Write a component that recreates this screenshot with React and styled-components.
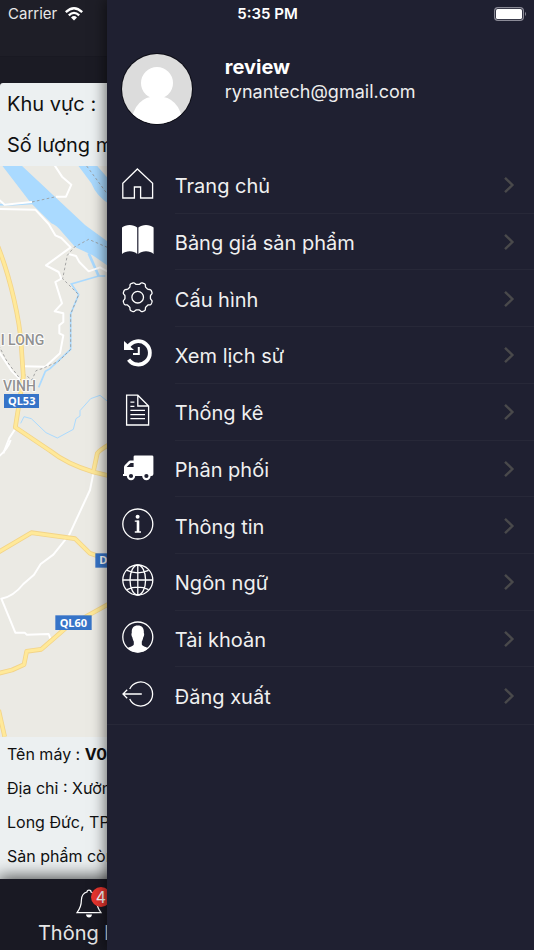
import React from 'react';
import styled, { createGlobalStyle } from 'styled-components';

const GlobalStyle = createGlobalStyle`
  * {
    box-sizing: border-box;
  }
  body {
    margin: 0;
    background: #1f2031;
    font-family: Inter, 'Noto Sans', sans-serif;
  }
`;

const line = { fill: 'none', stroke: 'currentColor', strokeWidth: 1.3 };

const gearPath = () => {
  const points = [];
  for (let i = 0; i <= 160; i += 1) {
    const angle = (i / 160) * Math.PI * 2;
    const wave = Math.cos(angle * 8 + Math.PI);
    const radius = 13.9 + 1.2 * Math.tanh(wave * 2.2);
    const turn = angle + Math.PI / 4;
    points.push(
      `${(15.7 + radius * Math.cos(turn)).toFixed(2)} ${(16.2 + radius * Math.sin(turn)).toFixed(2)}`
    );
  }
  return `M${points.join('L')}Z`;
};

const HomeIcon = () => (
  <g {...line}>
    <path d="M15.4 2 30.6 16.2V31H18.6V20H12.4V31H.8V16.2Z" />
  </g>
);

const BookIcon = () => (
  <path
    fill="currentColor"
    d="M0 3.6C3.6 0 11.6 0 15.2 3.6V30C11.6 26.4 4 26.4 0 30ZM16.4 3.6C20 0 28 0 31.6 3.6V30C28 26.4 20 26.4 16.4 30Z"
  />
);

const GearIcon = () => (
  <g {...line}>
    <path d={gearPath()} />
    <circle cx="15.7" cy="16.2" r="5.8" />
  </g>
);

const HistoryIcon = () => (
  <g fill="none" stroke="currentColor">
    <path strokeWidth="3.8" d="M6.4 9.4A11.7 11.7 0 1 1 6.6 22.6" />
    <path strokeWidth="2" d="M16.8 10V17H11" />
    <path fill="currentColor" stroke="none" d="M2 4 12 13H2Z" />
  </g>
);

const PaperIcon = () => (
  <g {...line}>
    <path d="M4.6 1.2H15.8L26.6 12V31H4.6ZM15.8 1.2V12H26.6" />
    <path d="M8.4 8.2H12.4M8.4 12.4H12.4M8.4 16.4H23M8.4 20.6H23M8.4 24.6H23" />
  </g>
);

const TruckIcon = () => (
  <g>
    <path
      fill="currentColor"
      fillRule="evenodd"
      d="M13 4.4H30Q31.4 4.4 31.4 5.8V23Q31.4 25 29.4 25H1V23H2V16.2Q2 15 3 14L6.4 10.4Q7.2 9.6 8.4 9.6H11.6V5.8Q11.6 4.4 13 4.4ZM4.6 16H11.6V12H8.6Z"
    />
    {[9, 24.4].map((cx) => (
      <g key={cx}>
        <circle cx={cx} cy="25" r="4.2" fill="currentColor" />
        <circle cx={cx} cy="25" r="2.1" fill="#1f2031" />
      </g>
    ))}
  </g>
);

const InfoIcon = () => (
  <g {...line}>
    <circle cx="15.8" cy="16" r="15" />
    <circle cx="15.6" cy="8.8" r="2" fill="currentColor" stroke="none" />
    <path strokeWidth="2.6" d="M16 12.6V24" />
    <path d="M12.8 13.2H16.8M12.8 24H19" />
  </g>
);

const GlobeIcon = () => (
  <g {...line}>
    <circle cx="15.8" cy="16" r="15" />
    <ellipse cx="15.8" cy="16" rx="7.8" ry="15" />
    <path d="M15.8 1V31M.8 16H30.8M5 6.4Q15.8 11.2 26.6 6.4M5 25.6Q15.8 20.8 26.6 25.6" />
  </g>
);

const PersonIcon = () => (
  <g>
    <path
      fill="currentColor"
      d="M15.8 4.4C20.6 4.4 22.2 7.6 21.8 12C22.6 12.8 22 15.4 21.2 16.4C20.8 18.6 20.2 19.6 19.8 20.6V23.4C20.8 25.6 24.6 26 26.4 27A15 15 0 0 1 5.2 27C7 26 10.8 25.6 11.8 23.4V20.6C11.4 19.6 10.8 18.6 10.4 16.4C9.6 15.4 9 12.8 9.8 12C9.4 7.6 11 4.4 15.8 4.4Z"
    />
    <circle cx="15.8" cy="16" r="15" {...line} />
  </g>
);

const LogoutIcon = () => (
  <g {...line}>
    <path d="M7.7 11A12 12 0 1 1 7.7 21" />
    <path d="M19.8 16H1.2M5.2 11.8 1 16 5.2 20.2" />
  </g>
);

const MENU = [
  { label: 'Trang chủ', Icon: HomeIcon },
  { label: 'Bảng giá sản phẩm', Icon: BookIcon },
  { label: 'Cấu hình', Icon: GearIcon },
  { label: 'Xem lịch sử', Icon: HistoryIcon },
  { label: 'Thống kê', Icon: PaperIcon },
  { label: 'Phân phối', Icon: TruckIcon },
  { label: 'Thông tin', Icon: InfoIcon },
  { label: 'Ngôn ngữ', Icon: GlobeIcon },
  { label: 'Tài khoản', Icon: PersonIcon },
  { label: 'Đăng xuất', Icon: LogoutIcon },
];

const YELLOW_ROADS = [
  'M-6 260C30 350 60 480 64 560L70 650L46 802L150 872Q200 912 280 936L330 948',
  'M280 936L292 880Q296 872 330 852',
  'M-4 1176L94 1118L225 1136L270 1180L300 1190',
  'M-4 1540L36 1530L72 1514L80 1474L124 1468L200 1402L330 1330',
  'M-4 1650L14 1730',
];

const WHITE_ROADS = [
  'M160 10L186 50L214 74L198 110L168 110M96 126L14 134L-4 118',
  'M-4 147L106 149L146 192L166 226L184 234L212 262L138 316L176 336L184 356L166 366L186 430L164 454L190 460V486L178 496V520L190 526L180 580L136 620L70 619',
  'M206 282L228 288L238 306L266 334L300 322L322 334',
  'M-4 574L36 634L66 664',
  'M46 806L28 834L10 880',
  'M32 840Q24 866 -4 890',
  'M280 940L270 990L208 1124L160 1184L122 1212L102 1244L70 1272Q40 1310 4 1316L46 1418L74 1418L80 1424L146 1422L152 1438',
];

const Map = () => (
  <MapSvg viewBox="0 18 1602 1713" preserveAspectRatio="xMinYMin slice" role="img" aria-label="Bản đồ">
    <g fill="#aadaff">
      <path d="M6 16H64L256 196L330 250V322L278 286L226 262L184 214Q170 196 154 190L92 128Z" />
      <path d="M234 16H290L330 62V134Q290 110 274 70Z" />
    </g>
    <g fill="none" stroke="#aadaff" strokeWidth="5">
      <path strokeWidth="8" d="M266 280L296 348" />
      <path d="M316 348H296L214 372L236 404L212 462V568L150 626L136 634L116 682" />
      <path strokeWidth="3" d="M62 790L72 770L94 776L138 818L172 834L220 808L228 776L240 768V752L272 716L300 706L330 730" />
      <path d="M-4 134H40L96 130" />
    </g>
    <g fill="none" stroke="#fff" strokeWidth="6" strokeLinejoin="round">
      {WHITE_ROADS.map((d) => (
        <path key={d} d={d} />
      ))}
    </g>
    <g fill="none" stroke="#9a9a9a" strokeWidth="2.6" strokeDasharray="8 7">
      <path d="M96 126L168 110" />
      <path d="M260 18L322 102" />
      <path d="M322 262L266 238L222 262L202 286L188 356L236 404L212 462V568L176 604L126 626L108 632L96 660L70 640" />
      <path d="M-4 556L22 606L66 664" />
    </g>
    <g fill="none" strokeLinejoin="round">
      {YELLOW_ROADS.map((d) => (
        <path key={d} d={d} stroke="#f3d488" strokeWidth="14" />
      ))}
      {YELLOW_ROADS.map((d) => (
        <path key={d} d={d} stroke="#ffe999" strokeWidth="9" />
      ))}
    </g>
    <g fontFamily="Roboto, sans-serif" fontSize="42" fontWeight="500" fill="#919191" stroke="#fff" strokeWidth="5" paintOrder="stroke">
      <text x="2" y="555">I LONG</text>
      <text x="9" y="693">VINH</text>
    </g>
    <g fill="#3674c8">
      <rect x="12" y="702" width="105" height="42" />
      <rect x="166" y="1366" width="109" height="44" />
      <rect x="286" y="1180" width="110" height="43" />
    </g>
    <g fontFamily="'Noto Sans', sans-serif" fontSize="33" fontWeight="700" fill="#fff">
      <text x="24" y="735">QL53</text>
      <text x="179" y="1400">QL60</text>
      <text x="298" y="1213">D</text>
    </g>
  </MapSvg>
);

const StatusBar = () => (
  <Status>
    <Carrier>
      Carrier
      <svg width="18" height="14" viewBox="0 0 18 14" aria-hidden="true">
        <g fill="none" stroke="#fff" strokeWidth="2.3">
          <path d="M.8 5.2Q9-2.6 17.2 5.2" />
          <path d="M3.8 8.4Q9 3.4 14.2 8.4" />
        </g>
        <path fill="#fff" d="M6 10.4Q9 7.8 12 10.4L9 13.6Z" />
      </svg>
    </Carrier>
    <Clock>5:35 PM</Clock>
    <Battery viewBox="0 0 33 14" aria-hidden="true">
      <rect x=".6" y=".6" width="28.8" height="12.8" rx="3.4" fill="none" stroke="#8b8b97" strokeWidth="1.2" />
      <rect x="2" y="2" width="26" height="10" rx="1.6" fill="#fff" />
      <path d="M31 4.8Q33 7 31 9.2Z" fill="#8b8b97" />
    </Battery>
  </Status>
);

const App = () => (
  <>
    <GlobalStyle />
    <Page>
      <Screen>
        <Header>
          <HeaderTop />
        </Header>
        <Filter>
          <FilterRow>Khu vực :</FilterRow>
          <FilterRow>Số lượng máy</FilterRow>
        </Filter>
        <MapArea>
          <Map />
        </MapArea>
        <Machine>
          <MachineRow>
            Tên máy : <b>V0</b>
          </MachineRow>
          <MachineRow>Địa chỉ : Xưởng</MachineRow>
          <MachineRow>Long Đức, TP</MachineRow>
          <MachineRow>Sản phẩm còn</MachineRow>
        </Machine>
        <TabBar>
          <Tab type="button">
            <Bell>
              <svg width="26" height="30" viewBox="0 0 26 30" aria-hidden="true">
                <path
                  fill="none"
                  stroke="#fff"
                  strokeWidth="1.2"
                  d="M13 1.2Q15 1.2 15 3Q20.4 4.4 20.6 11Q20.6 18 25 23.6H1Q5.4 18 5.4 11Q5.6 4.4 11 3Q11 1.2 13 1.2Z"
                />
                <path fill="#fff" d="M10 25.6H16Q15.6 28.6 13 28.6Q10.4 28.6 10 25.6Z" />
              </svg>
              <Badge>4</Badge>
            </Bell>
            Thông báo
          </Tab>
        </TabBar>
      </Screen>
      <Drawer>
        <Profile>
          <Avatar viewBox="0 0 72 72" role="img" aria-label="review">
            <clipPath id="face">
              <circle cx="36" cy="36" r="35" />
            </clipPath>
            <circle cx="36" cy="36" r="36" fill="#0d0d16" />
            <g clipPath="url(#face)">
              <rect width="72" height="72" fill="#dcdcdc" />
              <circle cx="36" cy="30" r="16" fill="#fff" />
              <path fill="#fff" d="M10 72Q12 44 36 43Q60 44 62 72Z" />
            </g>
          </Avatar>
          <div>
            <UserName>review</UserName>
            <Email>rynantech@gmail.com</Email>
          </div>
        </Profile>
        <nav>
          <Menu>
            {MENU.map(({ label, Icon }) => (
              <MenuItem key={label}>
                <MenuLink href="#">
                  <IconCell>
                    <svg width="32" height="32" viewBox="0 0 32 32" aria-hidden="true">
                      <Icon />
                    </svg>
                  </IconCell>
                  <MenuLabel>
                    <MenuText>{label}</MenuText>
                    <svg width="12" height="18" viewBox="0 0 12 18" aria-hidden="true">
                      <path fill="none" stroke="#49494b" strokeWidth="2.4" d="M2 1.8 9.4 9 2 16.2" />
                    </svg>
                  </MenuLabel>
                </MenuLink>
              </MenuItem>
            ))}
          </Menu>
        </nav>
      </Drawer>
      <StatusBar />
    </Page>
  </>
);

const Page = styled.div`
  position: relative;
  min-height: 100vh;
  overflow: hidden;
  color: #fff;
`;

const Screen = styled.main`
  display: flex;
  flex-direction: column;
  min-height: 100vh;
  background: #1b1b24;
  color: #111;
`;

const Header = styled.header`
  height: 83px;
`;

const HeaderTop = styled.div`
  height: 57px;
  background: #1e1e27;
  border-bottom: 1px solid #191922;
`;

const Filter = styled.section`
  padding: 1px 7px 0;
  border-radius: 3px 3px 0 0;
  background: #ecf0f1;
`;

const FilterRow = styled.div`
  font-size: 20px;
  line-height: 41px;
  white-space: nowrap;
`;

const MapArea = styled.section`
  flex: 1 1 0;
  min-height: 0;
  overflow: hidden;
  background: #ebeae4;
`;

const MapSvg = styled.svg`
  display: block;
  width: 100%;
  height: 100%;
`;

const Machine = styled.section`
  padding: 0 7px 6px;
  background: #ecf0f1;
`;

const MachineRow = styled.div`
  font-size: 16px;
  line-height: 34px;
  white-space: nowrap;
`;

const TabBar = styled.footer`
  display: flex;
  height: 71px;
  background: #191923;
  box-shadow: 0 0 16px 2px rgb(0 0 0 / 70%);
`;

const Tab = styled.button`
  flex: 0 0 33.333%;
  display: flex;
  flex-direction: column;
  align-items: center;
  padding: 10px 0 0;
  border: 0;
  background: none;
  color: #e6e6e6;
  font: inherit;
  font-size: 20px;
  line-height: 24px;
`;

const Bell = styled.span`
  position: relative;
  height: 32px;
`;

const Badge = styled.span`
  position: absolute;
  top: -2px;
  left: 15px;
  width: 20px;
  height: 20px;
  border-radius: 50%;
  background: #e8352e;
  color: #fff;
  font-size: 16px;
  line-height: 20px;
  text-align: center;
`;

const Drawer = styled.aside`
  position: absolute;
  inset: 0 0 0 20%;
  padding-top: 53px;
  background: #1f2031;
  box-shadow: 0 0 14px 1px rgb(0 0 0 / 60%);
`;

const Profile = styled.div`
  display: flex;
  gap: 32px;
  padding: 0 14px 32px;
`;

const Avatar = styled.svg`
  flex: none;
  width: 72px;
  height: 72px;
`;

const UserName = styled.div`
  font-size: 20px;
  font-weight: 700;
  line-height: 28px;
`;

const Email = styled.div`
  color: #ededed;
  font-size: 18px;
  line-height: 22px;
`;

const Menu = styled.ul`
  display: grid;
  grid-auto-rows: 1fr;
  min-height: 568px;
  margin: 0;
  padding: 0;
  border-bottom: 1px solid #272838;
  list-style: none;
`;

const MenuItem = styled.li`
  display: flex;
`;

const MenuLink = styled.a`
  flex: 1;
  display: flex;
  padding-left: 15px;
  color: #f0f0f0;
  text-decoration: none;
`;

const IconCell = styled.span`
  display: flex;
  align-items: center;
  width: 53px;
  padding-bottom: 4px;
  color: #fff;
`;

const MenuLabel = styled.span`
  flex: 1;
  display: flex;
  align-items: center;
  justify-content: space-between;
  padding: 1px 19px 0 0;

  ${MenuItem}:not(:last-child) & {
    border-bottom: 1px solid #272838;
  }
`;

const MenuText = styled.span`
  padding-top: 2px;
  font-size: 20px;
  line-height: 24px;
`;

const Status = styled.div`
  position: absolute;
  inset: 0 0 auto;
  display: grid;
  grid-template-columns: 1fr auto 1fr;
  align-items: center;
  height: 27px;
  padding: 0 7px 0 8px;
  font-size: 15px;
`;

const Carrier = styled.span`
  display: flex;
  align-items: center;
  gap: 8px;
  color: #e8e8e8;
`;

const Clock = styled.span`
  font-weight: 600;
`;

const Battery = styled.svg`
  justify-self: end;
  width: 33px;
  height: 14px;
`;

export default App;
